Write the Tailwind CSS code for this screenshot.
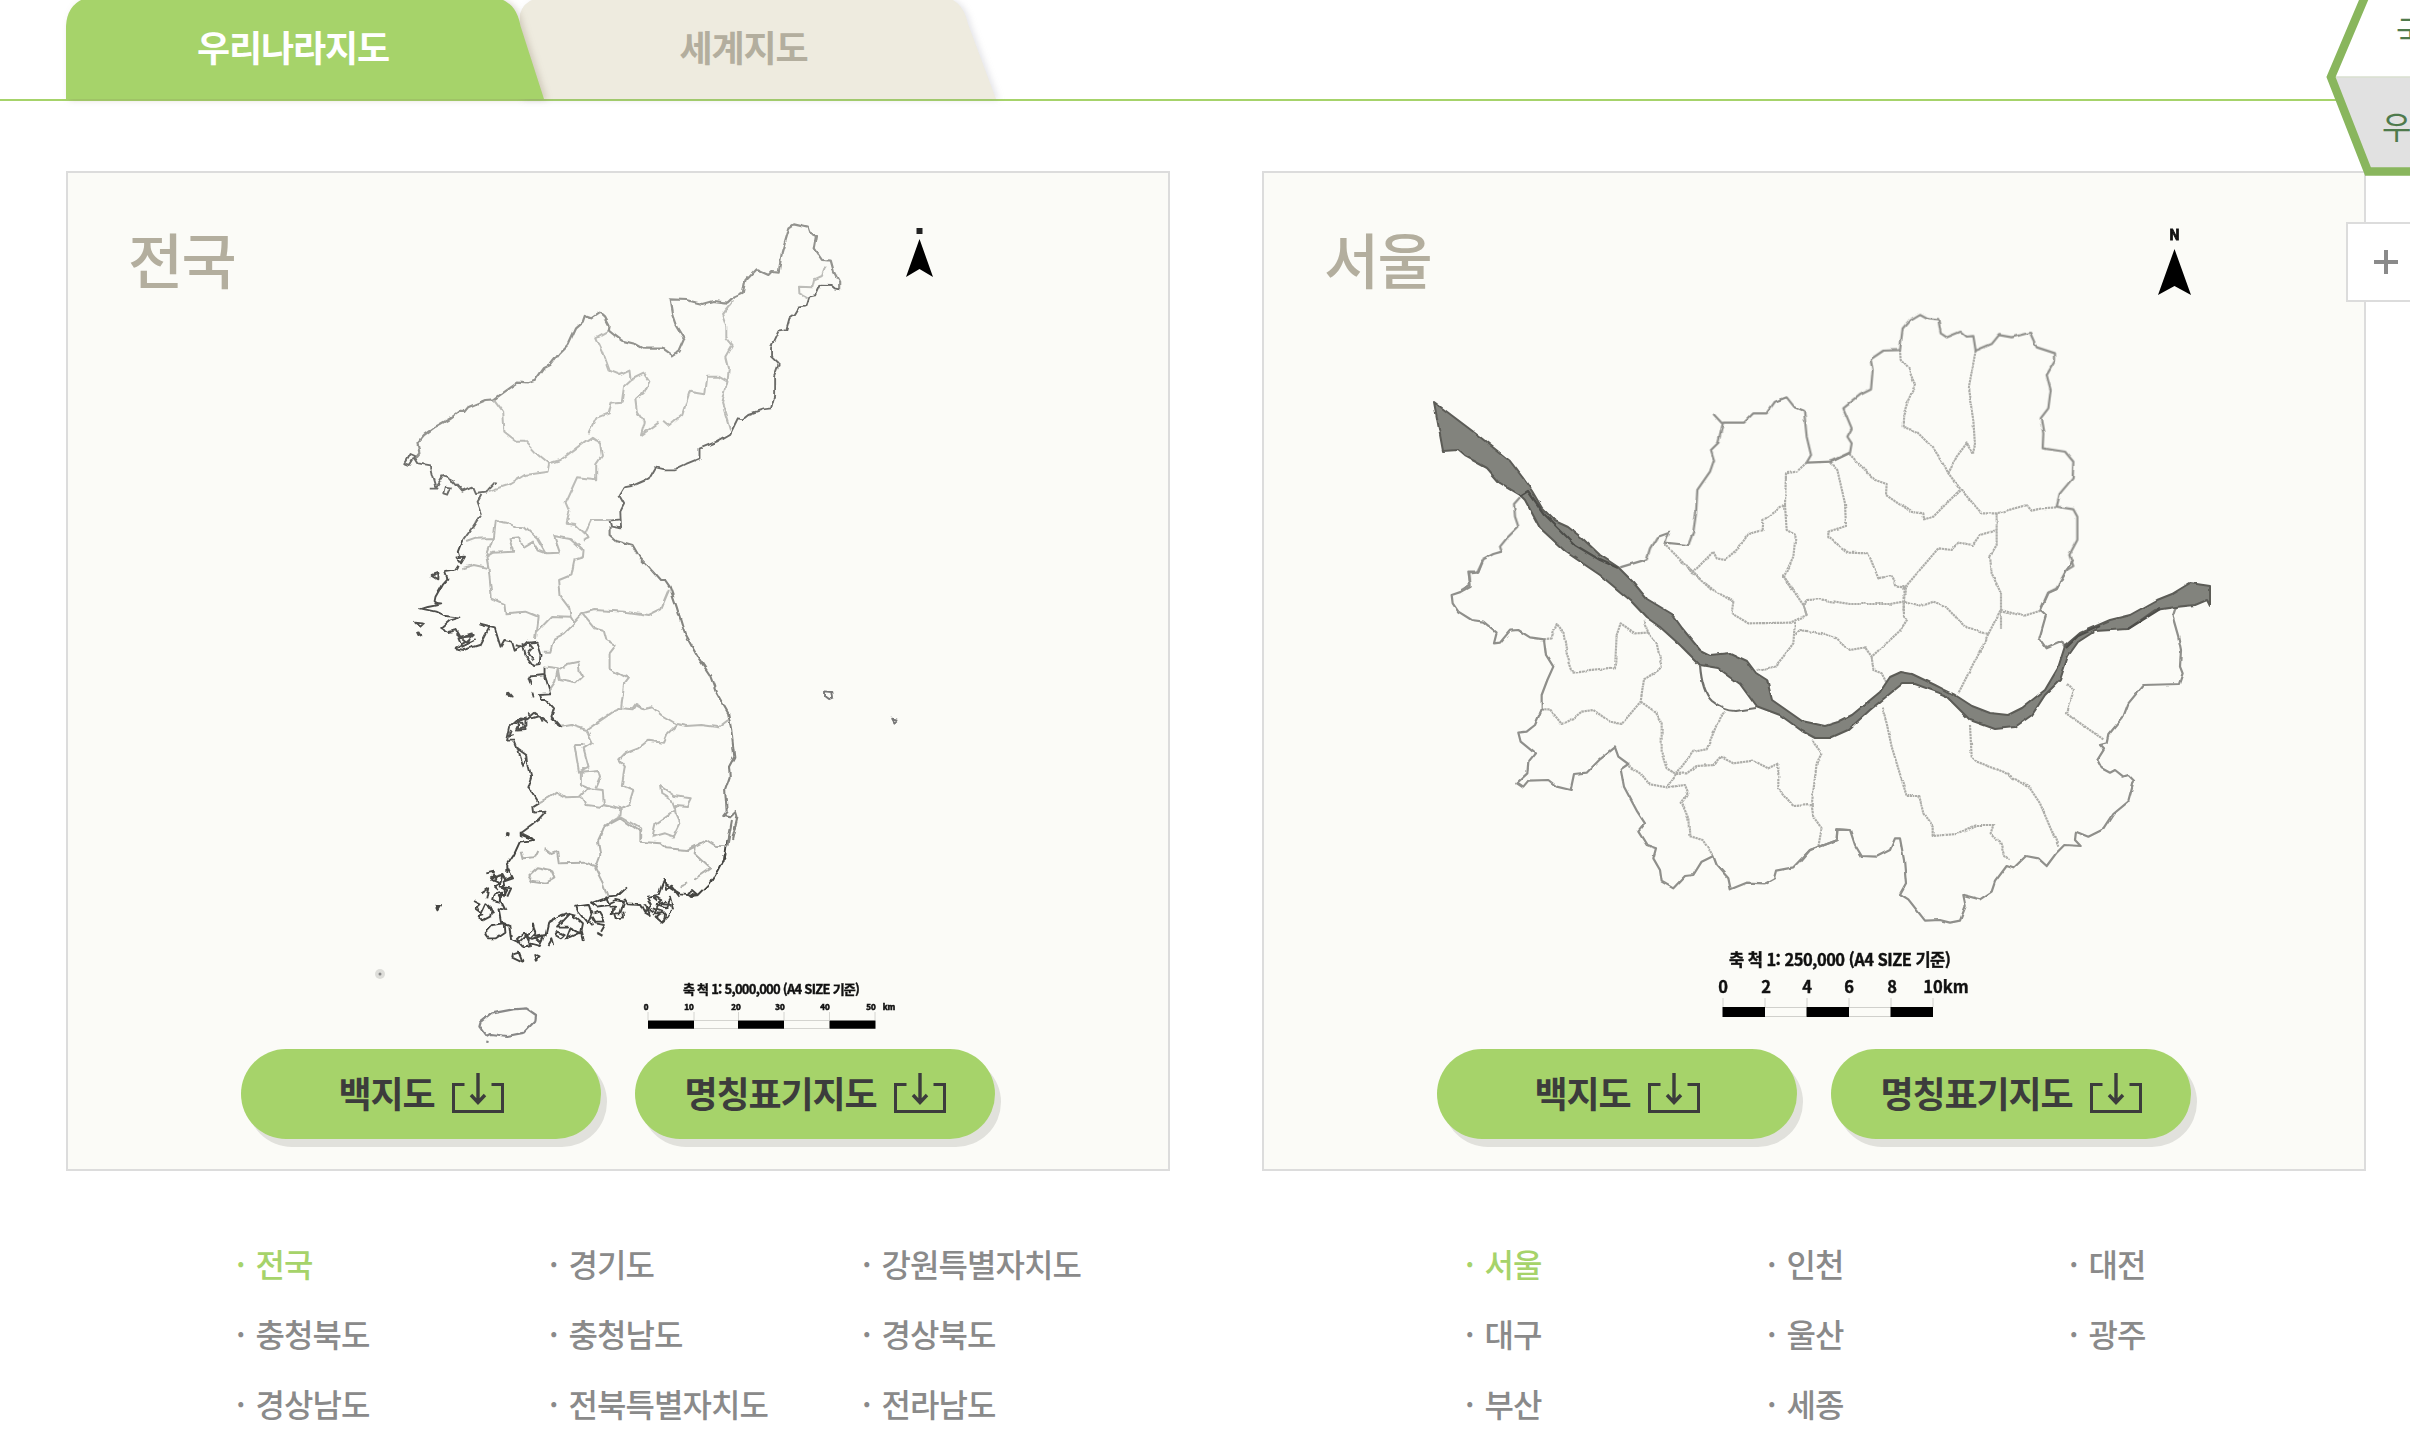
<!DOCTYPE html>
<html lang="ko">
  <head>
    <meta charset="UTF-8" />
    <meta name="viewport" content="width=device-width, initial-scale=1.0" />
    <title>백지도</title>
    <script src="https://cdn.jsdelivr.net/npm/@tailwindcss/browser@4"></script>
  </head>
  <body
    class="relative h-[1452px] w-[2410px] overflow-hidden bg-white font-['Noto_Sans_CJK_KR',sans-serif]"
  >
    <!-- shared icon -->
    <svg class="hidden">
      <symbol id="download" viewBox="0 0 52 40">
        <path d="M12.5 11.5H1.5V38.5H50.5V11.5H39.5" fill="none" stroke="#3c3c3c" stroke-width="3" />
        <path d="M26 0V29M19 22L26 29.5L33 22" fill="none" stroke="#3c3c3c" stroke-width="3.4" />
      </symbol>
    </svg>

    <!-- Tabs -->
    <nav class="flex h-[101px] border-b-2 border-[#a6d36a] pl-[66px]">
      <a class="relative z-10 block h-[99px] w-[454px] text-center text-[36px] leading-[93px] font-bold tracking-[-0.03em] text-white">
        <svg class="absolute top-0 left-0 overflow-visible" width="478" height="99">
          <path
            d="M0 99V26Q1 6 17 -1H435Q451 5 454.500 26L478 99Z"
            fill="#a6d36a"
            class="drop-shadow-[3px_1px_3px_rgba(120,100,80,0.25)]"
          />
        </svg>
        <span class="relative">우리나라지도</span>
      </a>
      <a class="relative block h-[99px] w-[447px] text-center text-[36px] leading-[93px] font-bold tracking-[-0.03em] text-[#b3ae9e]">
        <svg class="absolute top-0 left-0 overflow-visible" width="476" height="99">
          <path
            d="M0 99V14Q3 3 14 -1H431Q444 5 448 24L476 99Z"
            fill="#eeebdf"
            class="drop-shadow-[3px_1px_3px_rgba(120,120,140,0.2)]"
          />
        </svg>
        <span class="relative">세계지도</span>
      </a>
    </nav>

    <main class="flex gap-[92px] pt-[70px] pl-[66px]">
      <!-- Nationwide -->
      <section class="w-[1104px]">
        <div class="relative flex h-[1000px] flex-col justify-between border-2 border-[#dcdcdc] bg-[#fbfbf7]">
          <svg class="absolute inset-0" width="1100" height="996" viewBox="68 173 1100 996" fill="none">
            <defs>
              <filter id="rough" x="-5%" y="-5%" width="110%" height="110%">
                <feTurbulence type="fractalNoise" baseFrequency="0.09" numOctaves="2" seed="4" />
                <feDisplacementMap in="SourceGraphic" scale="5" xChannelSelector="R" yChannelSelector="G" />
              </filter>
            </defs>
            <g filter="url(#rough)" stroke-linejoin="round">
              <!-- north: coast and border -->
              <g transform="translate(380 200) scale(.38265 .33333)" stroke="#93938f" stroke-width="2.2">
                <path
                  vector-effect="non-scaling-stroke"
                  d="M92 775L103 760L98 728L115 705L145 680L180 658L208 635L220 636L230 622L275 600L298 598L330 572L360 548L385 550L405 542L428 505L445 495L470 458L490 435L510 385L530 365L535 348L552 355L574 338L588 352L600 378L598 392L612 405L632 422L668 432L690 446L740 446L765 466L780 455L795 416L772 372L764 345L757 298L800 300L842 312L870 303L908 308L925 290L948 278L955 240L982 208L1015 225L1025 213L1042 215L1050 160L1070 82L1082 73L1118 83L1122 97L1142 108L1136 148L1155 180L1178 182L1186 215L1200 245L1200 268"
                />
              </g>
              <g transform="translate(380 200) scale(.38265 .33333)" stroke="#6c6c69" stroke-width="1.9">
                <path
                  vector-effect="non-scaling-stroke"
                  d="M1200 268L1188 265L1178 255L1152 254L1140 285L1122 290L1115 315L1095 320L1082 345L1070 355L1062 388L1042 392L1022 440L1022 470L1042 492L1030 530L1030 590L1022 625L1000 628L965 642L948 658L935 655L915 702L880 725L835 746L835 775L800 792L770 808L742 808L718 802L700 838L660 858L640 862L626 888L638 912L628 935L630 985L604 980L600 962L628 958M92 775L100 790L130 796L135 822L145 862L165 825L192 842L215 872L240 860L248 882L275 878L302 845M265 885L255 905L266 940L240 985L218 1020M130 866L150 866M168 880L172 860L186 862L178 884ZM66 790L80 762L92 768L78 795Z"
                />
              </g>
              <g transform="translate(380 200) scale(.38265 .33333)" stroke="#bcbcb8" stroke-width="2">
                <path
                  vector-effect="non-scaling-stroke"
                  d="M298 598L322 635L325 695L355 722L378 722L405 755L442 790L472 780L535 725L552 712L575 730L580 765L565 790L565 838L515 832L500 870L485 908L495 935L488 968L510 972L535 1000L552 960L604 960M442 790L438 815L378 825L340 852L280 875M596 392L565 412L582 455L600 512L628 525L652 512L655 540L638 558L632 605L605 608L598 640L565 655L545 700M655 540L690 520M690 522L704 545L690 578L670 598L674 635L692 665L682 706L728 668M740 662L756 678L790 645L810 572L850 580L855 530L885 530L908 545L894 610L915 688M925 302L894 345L905 380L905 412L922 436L905 470L912 505L908 545M1164 200L1155 228L1135 238L1130 262L1095 260L1096 280L1115 292"
                />
              </g>
              <!-- middle -->
              <g transform="translate(380 500) scale(.38265 .33333)" stroke="#858581" stroke-width="2.1">
                <path
                  vector-effect="non-scaling-stroke"
                  d="M600 80L600 105L615 120L660 135L680 175L705 205L732 240L745 240L757 260L775 320L797 402L830 470L862 525L880 580L910 640L918 690L926 770L912 800L914 830L902 870L906 935L897 948L915 952L930 935L934 950L920 1020"
                />
              </g>
              <g transform="translate(380 500) scale(.38265 .33333)" stroke="#50504d" stroke-width="1.9">
                <path
                  vector-effect="non-scaling-stroke"
                  d="M218 120L206 155L210 172M200 172L222 170L212 190ZM206 195L196 212L170 216L176 236L165 250L145 290L142 308L160 310L125 318L105 325L145 335L170 348L210 352L182 362L160 384L178 396L200 390L210 410L245 405L225 425L195 445L220 450L262 435L286 382L262 374L300 385L315 440L325 420L345 425L352 452L385 432L412 428L422 465L420 495L402 498L380 465L372 430M135 228L150 222L150 238ZM92 368L112 370L103 380ZM97 400L108 405L100 408ZM388 530L430 525L436 545L445 580L415 582L420 600L435 600L455 625L448 650L475 685L455 670M388 530L395 555M430 500L430 540M335 578L344 590L334 586ZM398 578L402 592M440 668L405 638L385 658L365 655L340 680L332 722L352 722L360 745L385 765L388 800L395 830L385 865L400 880L415 908L398 920L400 938L435 935L415 960L368 1000L400 1018M365 690L380 680L380 655L360 665ZM360 745L375 800L385 770M327 1004L338 998M200 400L230 430L240 400L205 412L215 440L250 420"
                />
                <path vector-effect="non-scaling-stroke" d="M355 435L372 440L385 425L400 445L388 460L402 480M385 640L398 655L418 648L425 665M345 690L338 710L350 705M352 670L372 668L378 690L358 692L365 675" />
                <path vector-effect="non-scaling-stroke" stroke="#777" d="M1163 574L1182 576L1184 592L1172 598L1163 590ZM1336 656L1350 658L1342 668Z" />
              </g>
              <g transform="translate(380 500) scale(.38265 .33333)" stroke="#b8b8b4" stroke-width="2">
                <path
                  vector-effect="non-scaling-stroke"
                  d="M225 126L250 116L295 114L300 62L330 68L355 80L380 82L412 115L435 160L415 152L400 125L375 142L362 112L338 115L348 155L295 158L278 170L285 215L292 295L325 312L328 340L380 335L412 350L405 420M295 114L278 170M215 205L245 195L285 205M435 160L470 158L455 108L500 118L532 150L530 175L508 182L500 225L468 240L472 290L495 325L498 350L450 348L408 398M535 95L545 115L530 122M498 350L508 368L480 400L455 415L445 455L428 455M508 368L530 340L560 330L640 335L700 345L735 325L755 270M530 340L560 382L585 390L592 420L616 436L600 460L600 505L648 535L638 550L630 625M630 625L610 635L565 670L540 690L500 675L475 680M630 625L660 628L668 615L690 628L712 622L735 645L775 672L750 700L740 728L700 722L675 745L640 760L625 778L640 800L632 855L662 870L650 915L630 928L628 950L680 985L680 1020M775 672L800 678L840 675L885 682L910 660M628 950L590 975L575 1020M630 925L585 912L582 870L545 865L525 855L525 815L570 810L575 830L562 865M545 865L525 890L485 892L460 875L440 892L415 908M530 890L540 915L575 920L585 912M540 690L556 728L532 745L545 800L520 815L508 735L532 735M435 500L465 505L458 545L440 575M465 510L490 492L518 485L522 515L530 530L512 550L470 540ZM732 858L770 888L812 895L802 918L770 915L772 938L785 970L768 1010L745 1000L712 1010L720 970L770 930L760 900L735 882Z"
                />
              </g>
              <!-- south -->
              <g transform="translate(360 780) scale(.38265 .33333)" stroke="#454542" stroke-width="1.9">
                <path
                  vector-effect="non-scaling-stroke"
                  d="M420 155L420 165L455 180L418 185L402 225L385 255L385 280M960 180L955 225L935 270L915 310L885 345L835 340L800 315M950 225L948 245M385 260L400 295L375 305L380 345L360 345L380 390L362 385L368 425L390 435L395 480L415 490L450 450L452 430L460 470L485 465L492 430L525 408L550 400L565 405M330 280L350 275L345 300L365 310L350 320L360 330M315 340L335 325L330 355M298 360L315 370L300 385L318 400L330 370L345 385L340 410L320 422L312 410L325 405M350 340L372 335L365 365L345 360ZM340 295L372 285L365 320L395 325L385 350M325 460L345 435L378 430L380 455L355 475L335 475ZM565 380L598 375L605 400L595 430L570 395ZM605 370L648 352L672 350L695 325M605 365L620 380L650 375L640 350M650 370L670 360L690 365L680 400L655 400L672 380L650 380M690 355L700 370L735 372L745 395L760 370L750 350L780 345L795 300L800 330L815 320L835 350M745 370L760 405L745 395M770 350L790 360L775 375L800 385L810 350L818 385L805 410L790 425L775 410L790 395L765 385M800 365L785 372L812 375M855 340L870 330L885 345L865 348ZM410 480L430 460L445 495L425 500ZM450 480L480 470L470 498L445 490M490 495L500 475L505 495M515 455L535 465L525 475L510 465ZM525 430L550 400L580 430L575 460L550 445L540 475L580 455L585 480M605 410L615 430L640 435L630 455M610 400L625 395L640 425L615 425M620 458L636 468M400 520L415 515L425 545L398 530ZM458 525L472 532L462 542ZM200 375L212 375L205 388ZM380 158L390 164M530 420L515 440L545 440"
                />
                <path
                  vector-effect="non-scaling-stroke"
                  d="M345 285L355 290L350 305M372 285L380 300L398 290M370 320L385 330L375 350M305 375L312 390M335 375L348 400M660 385L668 415L690 412L688 395M755 385L768 395M780 375L770 400L800 400L798 420M765 350L778 362M460 475L470 485L478 480M435 470L445 480L462 460M600 425L610 438M865 340L880 345"
                />
                <path vector-effect="non-scaling-stroke" stroke="#888" stroke-width="2.2" d="M315 728L345 700L400 688L435 685L460 705L458 725L430 758L385 768L340 762L330 768L312 740ZM330 785L336 786" />
              </g>
              <g transform="translate(360 780) scale(.38265 .33333)" stroke="#b2b2ae" stroke-width="2">
                <path
                  vector-effect="non-scaling-stroke"
                  d="M648 352L635 310L615 265L628 225L622 185L640 140L680 115M615 258L590 248L520 250L515 215L500 222L480 205M466 210L455 235L425 238L420 215M440 285L462 262L500 270L508 292L485 308L450 302ZM680 115L730 155L730 185L785 190L800 205L855 210L875 198L905 180L930 198L960 198M875 198L872 220L915 265L870 300M855 310L835 320"
                />
                <path vector-effect="non-scaling-stroke" stroke="#858581" d="M972 120L960 198" />
              </g>
            </g>
            <circle cx="380" cy="974" r="5" fill="#dededa" />
            <circle cx="380" cy="974" r="1.500" fill="#888" />

            <!-- north arrow -->
            <path d="M919.500 239L933 277L919.500 269L906 277Z" fill="#000" />
            <rect x="916.500" y="228" width="6" height="6" fill="#222" />

            <!-- scale bar -->
            <g fill="#111" font-weight="700">
              <text x="683" y="994" font-size="13" textLength="177" stroke="#111" stroke-width=".4">축 척 1: 5,000,000 (A4 SIZE 기준)</text>
              <g font-size="8" text-anchor="middle" stroke="#111" stroke-width=".6">
                <text x="646" y="1010">0</text>
                <text x="689" y="1010">10</text>
                <text x="736" y="1010">20</text>
                <text x="780" y="1010">30</text>
                <text x="825" y="1010">40</text>
                <text x="871" y="1010">50</text>
                <text x="889" y="1010">km</text>
              </g>
            </g>
            <path d="M648 1012V1020M694 1012V1020M738.500 1012V1020M784 1012V1020M829.500 1012V1020M875 1012V1020M694 1020.500H738M694 1028.500H738M784 1020.500H829M784 1028.500H829" stroke="#d4d4d0" />
            <path d="M648 1020.500H694V1028.800H648ZM738 1020.500H784V1028.800H738ZM829.500 1020.500H875.500V1028.800H829.500Z" fill="#000" />
          </svg>

          <h2 class="relative mt-[40px] ml-[60px] text-[60px] leading-[90px] font-medium tracking-[-0.03em] text-[#b3ae9e]">전국</h2>
          <div class="relative mb-[30px] flex gap-[34px] pl-[173px]">
            <a class="flex h-[90px] w-[360px] items-center justify-center gap-[17px] rounded-full bg-[#a6d36a] pb-[4px] text-[36px] font-bold tracking-[-0.03em] text-[#3c3c3c] shadow-[6px_8px_0_#e1e1dc]">
              백지도
              <svg class="mt-[2px] h-10 w-[52px]"><use href="#download" /></svg>
            </a>
            <a class="flex h-[90px] w-[360px] items-center justify-center gap-[17px] rounded-full bg-[#a6d36a] pb-[4px] text-[36px] font-bold tracking-[-0.03em] text-[#3c3c3c] shadow-[6px_8px_0_#e1e1dc]">
              명칭표기지도
              <svg class="mt-[2px] h-10 w-[52px]"><use href="#download" /></svg>
            </a>
          </div>
        </div>
        <ul class="mt-[57px] ml-[170px] grid grid-cols-[repeat(3,313px)] text-[32px] leading-[70px] font-medium tracking-[-0.03em] whitespace-nowrap text-[#8a8a8a] [word-spacing:3px]">
          <li class="text-[#a6d36a]">· 전국</li>
          <li>· 경기도</li>
          <li>· 강원특별자치도</li>
          <li>· 충청북도</li>
          <li>· 충청남도</li>
          <li>· 경상북도</li>
          <li>· 경상남도</li>
          <li>· 전북특별자치도</li>
          <li>· 전라남도</li>
        </ul>
      </section>

      <!-- Seoul -->
      <section class="w-[1104px] shrink-0">
        <div class="relative flex h-[1000px] flex-col justify-between border-2 border-[#dcdcdc] bg-[#fbfbf7]">
          <svg class="absolute inset-0" width="1100" height="996" viewBox="1264 173 1100 996" fill="none">
            <defs>
              <filter id="soft" x="-5%" y="-5%" width="110%" height="110%">
                <feTurbulence type="fractalNoise" baseFrequency="0.08" numOctaves="2" seed="7" />
                <feDisplacementMap in="SourceGraphic" scale="3" xChannelSelector="R" yChannelSelector="G" />
              </filter>
            </defs>
            <g filter="url(#soft)" stroke-linejoin="round">
              <!-- district borders -->
              <g stroke="#adada9" stroke-width="6.500" stroke-dasharray="7 2">
                <path
                  transform="translate(1400 290) scale(.33333)"
                  d="M1220 518L1190 545L1158 550L1155 645L1090 690L1088 720L1045 732L1015 775L975 810L950 805L940 785L878 848M795 762L878 848L935 900M1155 645L1160 720L1187 735L1180 800L1152 860L1175 900"
                />
                <path
                  transform="translate(1800 290) scale(.33333)"
                  d="M300 180L302 210L325 235L345 285L325 330L310 375L308 410L350 425L400 475L430 520L445 550L482 598L545 670L590 670L680 645L695 662L725 655L770 652M527 182L505 300L520 390L525 465L518 492L500 460L470 500L445 550M148 492L225 570L260 582L258 615L330 665L370 670L372 688L400 680L482 598M90 518L112 540L135 640L138 708L85 725L85 742L145 788L205 790L235 865L275 858L290 890L315 892L415 775L455 780L475 758L518 765L540 735L590 720M590 670L590 765L570 798L575 850L603 910L603 1020M315 892L310 965"
                />
                <path
                  transform="translate(1400 560) scale(.33333)"
                  d="M835 0L878 38L940 90L1000 125L995 160L1045 190L1170 188L1220 165L1210 135L1152 50M432 238L455 235L470 192L490 215L500 280L520 338L645 325L650 225L662 190L705 220L745 218L730 180M745 218L770 250L785 320L770 335L732 358L722 425L665 492L630 485L580 450L545 455L520 475L485 492L450 448L425 448M722 425L765 455L785 490L785 580L800 625L828 642L880 575L920 568L960 470L975 455M685 618L720 640L745 672L800 682L855 675L865 700L845 728L865 775L868 828L908 840L940 888M828 642L800 682M828 642L860 640L890 618L940 615L962 590L1000 610L1060 602L1105 625L1135 610L1135 685L1180 738L1235 735L1250 610L1265 580L1235 540M1235 735L1240 770L1265 805L1255 860M1185 185L1180 250L1150 290L1125 320L1070 330"
                />
                <path
                  transform="translate(1800 560) scale(.33333)"
                  d="M10 135L20 120L60 118L150 132L270 132L310 125L360 140L400 125L435 138L500 205L565 222L602 150L670 168L722 152M310 75L312 170L322 178L300 212L270 240L215 290L195 262L150 270L110 235L70 220L0 210L-15 225M215 290L220 330L245 340L258 365M565 222L475 400M245 440L260 490L275 560L320 708L358 708L370 760L398 800L398 828L470 822L530 795L580 795L572 820L600 845L612 885L628 900M510 495L515 590L530 605L610 635L690 685L720 730L775 860M798 372L822 390L798 460L910 538M20 165L10 135"
                />
              </g>
              <!-- city limits -->
              <g stroke="#8f8f8b" stroke-width="6.600">
                <path
                  transform="translate(1400 290) scale(.33333)"
                  d="M360 622L342 642L345 680L355 710L320 745L300 770L305 785L280 792L250 808L230 848L208 850L210 885L185 900M660 832L740 808L750 775L770 742L808 728L795 758L865 765L880 725L888 670L892 600L930 545L942 510L933 480L955 458L968 402L940 372M968 398L1032 398L1060 370L1100 370L1125 335L1160 322L1182 350L1212 362L1220 440L1233 495L1220 518L1295 515L1350 488"
                />
                <path
                  transform="translate(1800 290) scale(.33333)"
                  d="M90 515L150 488L155 460L142 440L155 415L130 355L180 315L213 298L218 240L212 208L250 182L300 180L308 115L330 90L360 72L385 85L415 88L422 130L440 142L482 125L500 140L520 138L527 182L575 162L597 135L635 142L690 128L710 172L765 190L765 212L740 255L752 300L745 355L722 385L730 430L728 475L795 485L820 515L818 565L780 610L770 650L820 658L832 680L832 750L808 795L820 828L800 840L770 895L745 908L722 960"
                />
                <path
                  transform="translate(1400 560) scale(.33333)"
                  d="M248 0L235 35L205 35L212 80L185 95L155 105L158 130L175 155L215 180L250 185L290 218L282 250L300 248L330 212L355 210L390 232L432 238L438 285L460 320L442 360L425 405L425 448L405 495L380 515L355 518L362 545L405 580L385 605L382 640L352 668L370 680L385 662L445 660L470 680L512 690L522 642L560 638L600 598L645 562L655 590L685 612L662 628L672 680L712 755L735 790L715 815L740 855L768 865L760 895L780 930L785 965L820 985L855 948L880 945L905 905L940 888L950 915L985 955L992 988L1040 968L1095 970L1122 955L1128 932L1180 922L1230 870L1310 840L1312 808L1345 810"
                />
                <path
                  transform="translate(1800 560) scale(.33333)"
                  d="M820 0L800 30L770 88L745 98L722 150L738 165L718 235L740 265L785 245L795 262M1128 140L1118 170L1135 230L1143 270L1140 320L1148 340L1137 372L1030 375L985 430L970 470L925 525L920 550L900 555L912 568L892 600L905 625L930 638L945 630L970 650L985 645L1002 662L985 725L940 762L910 808L865 830L828 815L825 840L842 858L793 855L770 878L740 918L715 895L678 888L640 925L620 918L585 965L575 995L540 1018L490 1005L497 1038L480 1082L450 1088L420 1080L375 1082L325 1018L300 1002L318 970L312 900L300 835L285 835L270 870L230 890L185 888L165 855L150 810L112 808L110 840L30 870L0 905"
                />
              </g>
              <!-- Han river -->
              <path
                d="M1434 402L1475 433L1510 461L1523 478L1532 491L1542 508L1555 521L1568 527L1582 538L1600 555L1618 567L1633 582L1647 599L1667 611L1672 614L1682 628L1700 650L1710 655L1730 653L1747 661L1756 673L1767 680L1772 700L1802 721L1825 726L1838 722L1852 715L1880 692L1890 677L1901 672L1912 674L1935 685L1955 695L1972 706L1990 713L2008 715L2022 708L2045 690L2058 668L2065 646L2080 633L2110 620L2130 615L2157 600L2172 594L2190 583L2210 586V606L2207 600L2195 605L2176 607L2155 610L2128 629L2095 631L2078 642L2068 656L2060 680L2045 695L2032 715L2015 727L1995 729L1970 720L1945 695L1915 684L1902 684L1887 696L1870 710L1848 730L1830 738L1815 738L1802 731L1780 715L1756 706L1748 695L1740 684L1718 668L1700 665L1680 645L1660 627L1646 617L1630 600L1600 575L1566 552L1540 528L1525 500L1520 495L1500 483L1487 468L1465 456L1458 450L1443 451Z"
                fill="#82837d"
                stroke="#5b5b57"
                stroke-width="2"
              />
              <path d="M1520 496L1528 491L1545 515L1575 545L1600 560L1618 568M2066 648L2078 636L2100 626M2128 629L2160 609" stroke="#4d4d49" stroke-width="2.200" />
              <path d="M1700 665Q1702 692 1712 701Q1724 711 1736 711L1756 708" stroke="#70706c" stroke-width="2.200" />
            </g>

            <!-- north arrow -->
            <path d="M2174.500 249L2191 295L2174.500 286L2158 295Z" fill="#000" />
            <text x="2174.500" y="240" font-size="14" font-weight="700" text-anchor="middle" fill="#111" stroke="#111" stroke-width=".8">N</text>

            <!-- scale bar -->
            <g fill="#111" font-weight="700" stroke="#111" stroke-width=".4">
              <text x="1729" y="966" font-size="16.500" textLength="222">축 척 1: 250,000 (A4 SIZE 기준)</text>
              <g font-size="16.500" text-anchor="middle">
                <text x="1723" y="992.500">0</text>
                <text x="1766" y="992.500">2</text>
                <text x="1807" y="992.500">4</text>
                <text x="1849" y="992.500">6</text>
                <text x="1892" y="992.500">8</text>
                <text x="1946" y="992.500">10km</text>
              </g>
            </g>
            <path d="M1723 998V1007M1765 998V1007M1807 998V1007M1849 998V1007M1891 998V1007M1933 998V1007M1765 1007.500H1806M1765 1016.500H1806M1849 1007.500H1891M1849 1016.500H1891" stroke="#d0d0cc" />
            <path d="M1722.500 1007H1765V1017H1722.500ZM1806.500 1007H1849V1017H1806.500ZM1890.500 1007H1933V1017H1890.500Z" fill="#000" />
          </svg>

          <h2 class="relative mt-[40px] ml-[60px] text-[60px] leading-[90px] font-medium tracking-[-0.03em] text-[#b3ae9e]">서울</h2>
          <div class="relative mb-[30px] flex gap-[34px] pl-[173px]">
            <a class="flex h-[90px] w-[360px] items-center justify-center gap-[17px] rounded-full bg-[#a6d36a] pb-[4px] text-[36px] font-bold tracking-[-0.03em] text-[#3c3c3c] shadow-[6px_8px_0_#e1e1dc]">
              백지도
              <svg class="mt-[2px] h-10 w-[52px]"><use href="#download" /></svg>
            </a>
            <a class="flex h-[90px] w-[360px] items-center justify-center gap-[17px] rounded-full bg-[#a6d36a] pb-[4px] text-[36px] font-bold tracking-[-0.03em] text-[#3c3c3c] shadow-[6px_8px_0_#e1e1dc]">
              명칭표기지도
              <svg class="mt-[2px] h-10 w-[52px]"><use href="#download" /></svg>
            </a>
          </div>
        </div>
        <ul class="mt-[57px] ml-[203px] grid grid-cols-[repeat(3,302px)] text-[32px] leading-[70px] font-medium tracking-[-0.03em] whitespace-nowrap text-[#8a8a8a] [word-spacing:3px]">
          <li class="text-[#a6d36a]">· 서울</li>
          <li>· 인천</li>
          <li>· 대전</li>
          <li>· 대구</li>
          <li>· 울산</li>
          <li>· 광주</li>
          <li>· 부산</li>
          <li>· 세종</li>
        </ul>
      </section>
    </main>

    <!-- Floating quick menu, cut off by the window edge -->
    <aside class="absolute top-0 right-0 h-[176px] w-[84px] overflow-hidden text-[32px] leading-[48px] tracking-[-0.03em] text-[#4f7a4c]">
      <svg class="absolute inset-0" width="84" height="176">
        <path d="M37 -4L5 77L41.500 172H90V-4Z" fill="#fff" />
        <path d="M5 77L41.500 172H90V77Z" fill="#e1e1e1" />
        <path d="M8 77H84" stroke="#d8dfcf" stroke-width="1.500" />
        <path d="M41 -8L5 77L42 171.500H90" fill="none" stroke="#89b65d" stroke-width="8.500" />
      </svg>
      <span class="absolute top-[6px] left-[70px] whitespace-nowrap">국내</span>
      <span class="absolute top-[101px] left-[56px] whitespace-nowrap">우리</span>
    </aside>
    <button class="absolute top-[222px] left-[2346px] h-20 w-20 border-2 border-[#dcdcdc] bg-white">
      <svg class="absolute top-[26px] left-[26px]" width="24" height="24">
        <path d="M12 0V24M0 12H24" stroke="#8a8a8a" stroke-width="4" />
      </svg>
    </button>
  </body>
</html>
